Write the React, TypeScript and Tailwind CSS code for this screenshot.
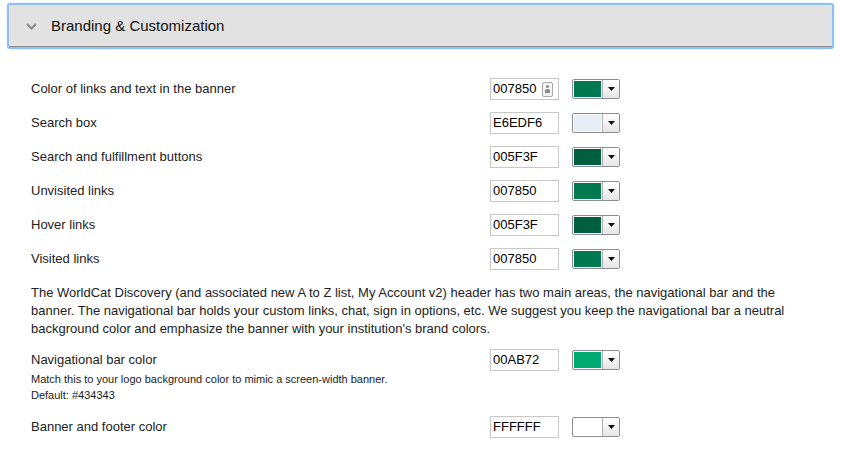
import React from "react";

const rows = [
  { label: "Color of links and text in the banner", hex: "007850", icon: true },
  { label: "Search box", hex: "E6EDF6" },
  { label: "Search and fulfillment buttons", hex: "005F3F" },
  { label: "Unvisited links", hex: "007850" },
  { label: "Hover links", hex: "005F3F" },
  { label: "Visited links", hex: "007850" },
];

const HexInput = ({ value, icon }: { value: string; icon?: boolean }) => (
  <div className="relative w-[69px] h-[22px] border border-[#c8c8c8] bg-white flex items-center pl-[2px] text-[13px] text-black">
    {value}
    {icon && (
      <span className="absolute right-[5px] top-[3px] w-[11px] h-[15px] border border-[#a8a8a8] rounded-[2px] bg-[#f4f4f4] flex flex-col items-center pt-[2px]">
        <span className="w-[3px] h-[3px] rounded-full bg-[#8a8a8a]" />
        <span className="w-[5px] h-[4px] mt-[1px] rounded-t-[2px] bg-[#8a8a8a]" />
      </span>
    )}
  </div>
);

const Swatch = ({ color }: { color: string }) => (
  <div className="flex w-[48px] h-[20px] border border-[#8e8e8e] rounded-[2px] bg-white">
    <div className="flex-1 p-[1px] border-r border-[#b0b0b0]">
      <div className="w-full h-full" style={{ backgroundColor: color }} />
    </div>
    <div className="w-[16px] flex items-center justify-center bg-gradient-to-b from-white to-[#e6e6e6]">
      <svg width="7" height="4" viewBox="0 0 7 4">
        <path d="M0 0h7L3.5 4z" fill="#111" />
      </svg>
    </div>
  </div>
);

const Row = ({ label, hex, icon }: { label: string; hex: string; icon?: boolean }) => (
  <div className="flex items-center h-[34px]">
    <div className="w-[459px] text-[13px] text-[#222]">{label}</div>
    <HexInput value={hex} icon={icon} />
    <div className="ml-[13px]">
      <Swatch color={"#" + hex} />
    </div>
  </div>
);

export default function App() {
  return (
    <div className="w-[841px] h-[467px] bg-white overflow-hidden" style={{ fontFamily: '"Liberation Sans", Arial, sans-serif' }}>
      <div className="mx-[7px] mt-[3px] border-2 border-[#8cc1f6] rounded-[3px] shadow-[0_0_2px_#b9d9fb]">
        <div className="h-[42px] bg-[#e2e2e2] border-b border-[#8f8f8f] flex items-center pl-[17px]">
          <svg width="11" height="7" viewBox="0 0 11 7" className="mr-[14px] mt-[2px]">
            <path d="M1 1l4.5 4.5L10 1" stroke="#8a8a8a" strokeWidth="2.2" fill="none" />
          </svg>
          <span className="text-[15px] text-[#111] mt-[2px]">Branding &amp; Customization</span>
        </div>
      </div>

      <div className="pl-[31px] pt-[23px]">
        {rows.map((r) => (
          <Row key={r.label} {...r} />
        ))}

        <p className="mt-[8px] w-[775px] text-[13px] leading-[18px] text-[#222]">
          The WorldCat Discovery (and associated new A to Z list, My Account v2) header has two main areas, the navigational bar and the banner. The navigational bar holds your custom links, chat, sign in options, etc. We suggest you keep the navigational bar a neutral background color and emphasize the banner with your institution's brand colors.
        </p>

        <div className="flex items-start mt-[11px]">
          <div className="w-[459px] text-[#222]">
            <div className="text-[13px] leading-[22px]">Navigational bar color</div>
            <div className="text-[11px] leading-[16px]">Match this to your logo background color to mimic a screen-width banner.</div>
            <div className="text-[11px] leading-[16px]">Default: #434343</div>
          </div>
          <HexInput value="00AB72" />
          <div className="ml-[13px] mt-[1px]">
            <Swatch color="#00AB72" />
          </div>
        </div>

        <div className="mt-[7px]">
          <Row label="Banner and footer color" hex="FFFFFF" />
        </div>
      </div>
    </div>
  );
}
